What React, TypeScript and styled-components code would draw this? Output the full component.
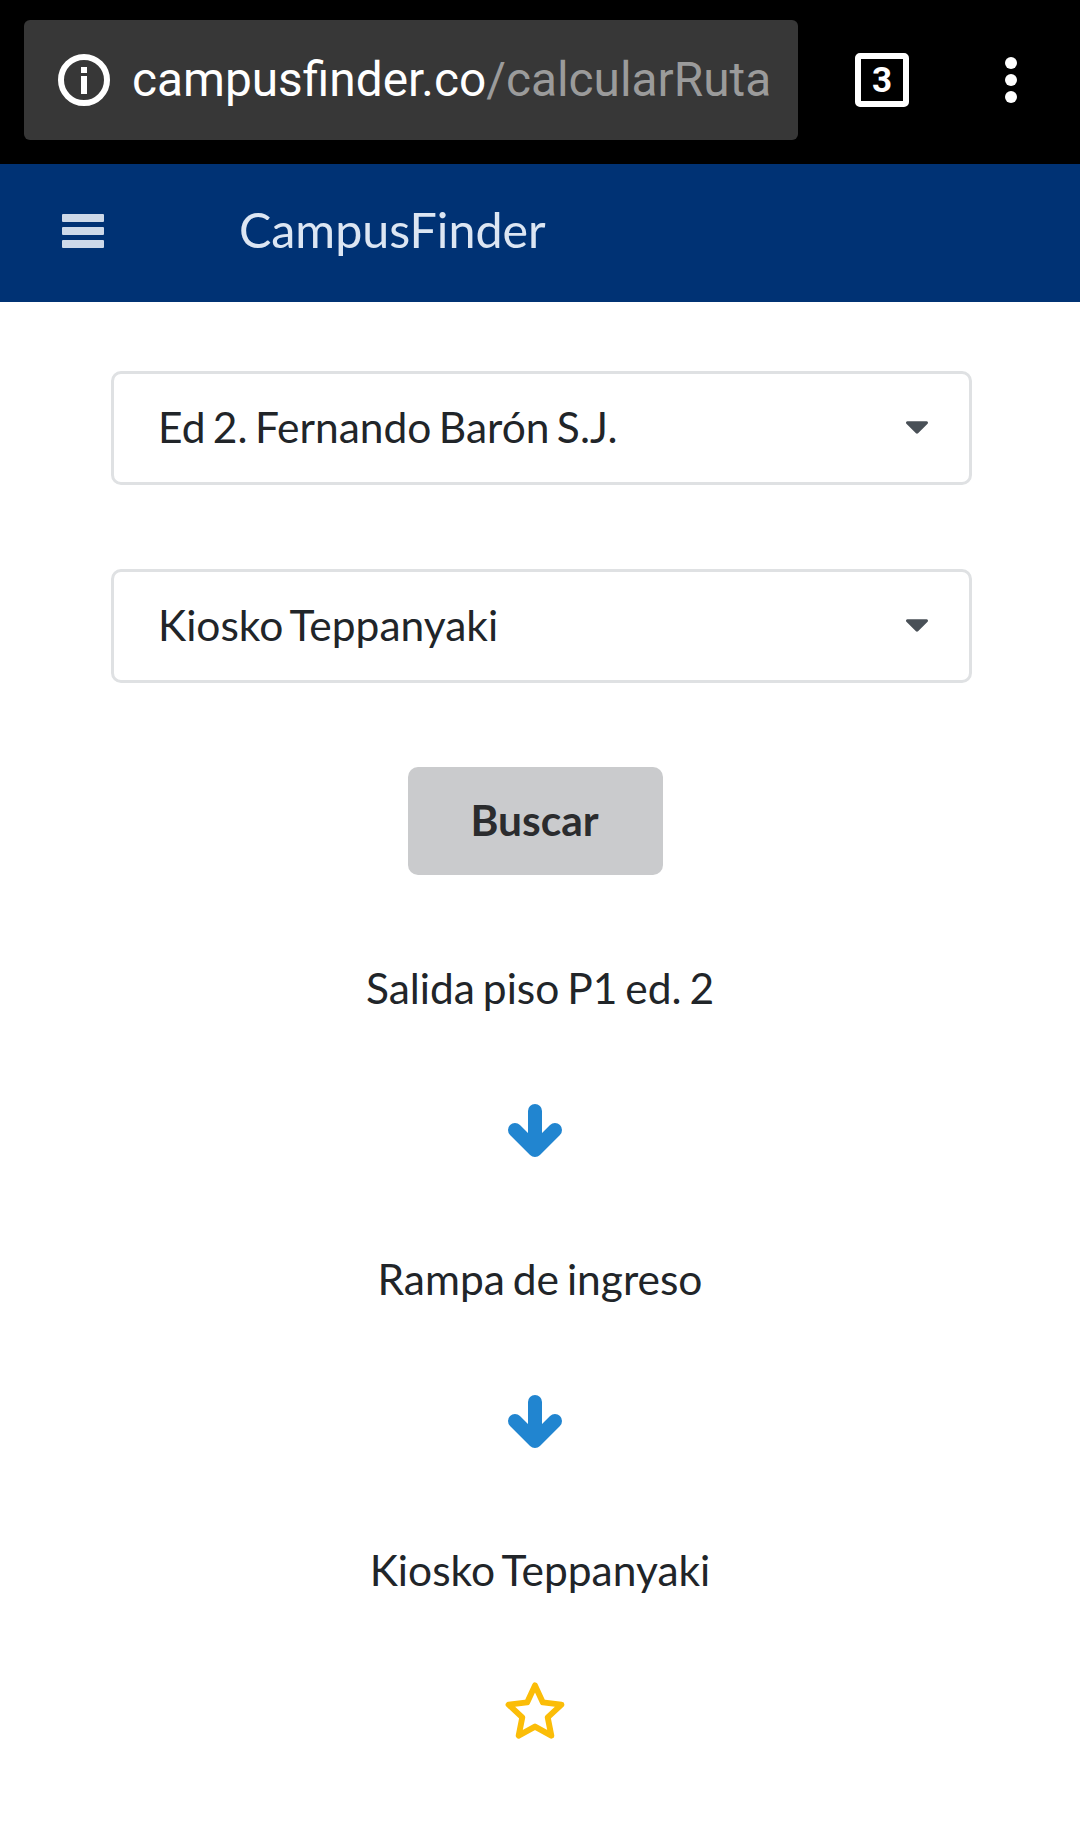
import React from "react";
import styled, { createGlobalStyle } from "styled-components";
import { FaCaretDown } from "react-icons/fa";

const GlobalStyle = createGlobalStyle`
  html, body {
    margin: 0;
    padding: 0;
    background: #fff;
  }
`;

const Page = styled.div`
  width: 1080px;
  height: 1839px;
  overflow: hidden;
  background: #fff;
  font-family: "Lato", sans-serif;
  color: #212529;
`;

const BrowserBar = styled.div`
  height: 164px;
  box-sizing: border-box;
  padding: 20px 0 24px 24px;
  background: #000;
  display: flex;
  align-items: stretch;
`;

const UrlBox = styled.div`
  width: 774px;
  box-sizing: border-box;
  padding-left: 34px;
  gap: 22px;
  background: #373737;
  border-radius: 6px;
  display: flex;
  align-items: center;
  font-family: "Roboto", sans-serif;
  font-size: 47.8px;
  color: #fff;
  white-space: nowrap;
`;

const UrlPath = styled.span`
  color: #9b9b9b;
`;

const TabCount = styled.div`
  width: 54px;
  height: 54px;
  box-sizing: border-box;
  margin: 33px 0 0 57px;
  border: 6px solid #fff;
  border-radius: 5px;
  display: flex;
  align-items: center;
  justify-content: center;
  font-family: "Roboto", sans-serif;
  font-size: 35px;
  font-weight: 700;
  color: #fff;
`;

const MenuDots = styled.div`
  margin: 37px 0 0 96px;
  height: 46px;
  display: flex;
  flex-direction: column;
  justify-content: space-between;
`;

const Dot = styled.span`
  width: 12px;
  height: 12px;
  border-radius: 50%;
  background: #fff;
`;

const NavBar = styled.div`
  height: 138px;
  background: #003274;
  display: flex;
  align-items: center;
  padding-left: 62px;
  gap: 135px;
  color: #dce6f3;
`;

const Burger = styled.svg`
  width: 42px;
  height: 34px;
  margin-top: -4px;
  fill: #cdd9e9;
`;

const Brand = styled.div`
  font-size: 48.4px;
  line-height: 1;
  margin-top: -7px;
`;

const Content = styled.main`
  display: flex;
  flex-direction: column;
  align-items: center;
  padding-top: 69px;
`;

const Select = styled.div<{ $gap: number }>`
  width: 861px;
  height: 114px;
  box-sizing: border-box;
  margin: 0 0 ${(p) => p.$gap}px 3px;
  padding: 0 40px 4px 44px;
  border: 3px solid #dfe1e3;
  border-radius: 10px;
  display: flex;
  align-items: center;
  justify-content: space-between;
  font-size: 42.5px;
  word-spacing: -3.5px;
`;

const Caret = styled(FaCaretDown)`
  width: 24px;
  height: 38px;
  color: #495057;
`;

const SearchButton = styled.button`
  width: 255px;
  height: 108px;
  margin: 0 9px 0 0;
  padding: 0 2px 4px 0;
  border: none;
  border-radius: 10px;
  background: #cacbcd;
  font-family: "Lato", sans-serif;
  font-size: 42.5px;
  font-weight: 700;
  color: #2b2c2e;
`;

const RouteList = styled.div`
  display: flex;
  flex-direction: column;
  align-items: center;
  margin-top: 83px;
`;

const Stop = styled.div`
  height: 60px;
  line-height: 60px;
  font-size: 42.5px;
  word-spacing: -3px;
  text-align: center;
`;

const StepIcon = styled.div`
  height: 231px;
  box-sizing: border-box;
  padding-bottom: 6px;
  margin-right: 10px;
  display: flex;
  align-items: center;
  justify-content: center;
`;

const ArrowIcon = styled.svg`
  width: 56px;
  height: 54px;
  fill: none;
  stroke: #2185d0;
  stroke-width: 14px;
  stroke-linecap: round;
  stroke-linejoin: round;
`;

const StarIcon = styled.svg`
  width: 62px;
  height: 60px;
  margin-bottom: 6px;
  fill: none;
  stroke: #fbbd08;
  stroke-width: 5.5px;
  stroke-linejoin: round;
`;

const stops = ["Salida piso P1 ed. 2", "Rampa de ingreso", "Kiosko Teppanyaki"];

const App: React.FC = () => {
  return (
    <Page>
      <GlobalStyle />
      <BrowserBar>
        <UrlBox>
          <svg width="52" height="52" viewBox="0 0 52 52" fill="none">
            <circle cx="26" cy="26" r="23" stroke="#fff" strokeWidth="6" />
            <rect x="23" y="13" width="6" height="6" fill="#fff" />
            <rect x="23" y="22" width="6" height="18" fill="#fff" />
          </svg>
          <span>
            campusfinder.co<UrlPath>/calcularRuta</UrlPath>
          </span>
        </UrlBox>
        <TabCount>3</TabCount>
        <MenuDots>
          <Dot />
          <Dot />
          <Dot />
        </MenuDots>
      </BrowserBar>
      <NavBar>
        <Burger viewBox="0 0 42 34">
          <rect width="42" height="8" y="0" rx="1" />
          <rect width="42" height="8" y="13" rx="1" />
          <rect width="42" height="8" y="26" rx="1" />
        </Burger>
        <Brand>CampusFinder</Brand>
      </NavBar>
      <Content>
        <Select $gap={84}>
          Ed 2. Fernando Barón S.J.
          <Caret />
        </Select>
        <Select $gap={84}>
          Kiosko Teppanyaki
          <Caret />
        </Select>
        <SearchButton>Buscar</SearchButton>
        <RouteList>
          {stops.map((stop, i) => (
            <React.Fragment key={stop}>
              <Stop>{stop}</Stop>
              <StepIcon>
                {i < stops.length - 1 ? (
                  <ArrowIcon viewBox="0 0 56 54">
                    <path d="M28 7V46M8 26L28 46L48 26" />
                  </ArrowIcon>
                ) : (
                  <StarIcon viewBox="0 0 58 56">
                    <polygon points="29,5 36.35,20.89 53.73,22.97 40.89,34.86 44.28,52.03 29,43.5 13.72,52.03 17.11,34.86 4.27,22.97 21.65,20.89" />
                  </StarIcon>
                )}
              </StepIcon>
            </React.Fragment>
          ))}
        </RouteList>
      </Content>
    </Page>
  );
};

export default App;
